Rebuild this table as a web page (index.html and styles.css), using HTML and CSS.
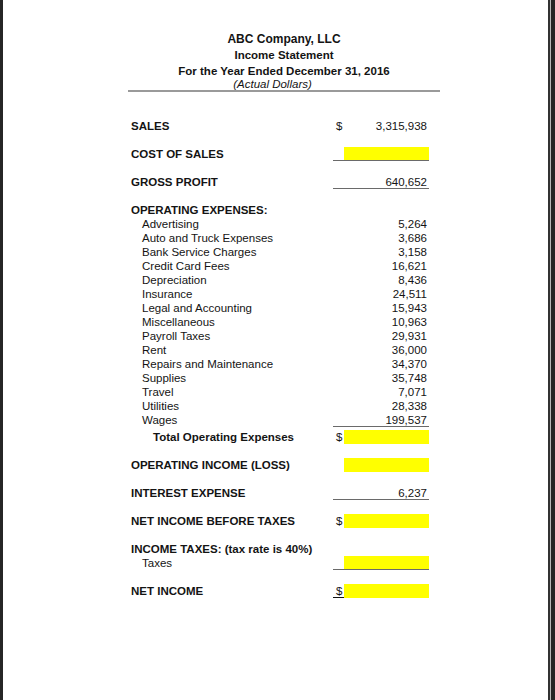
FILE: index.html
```html
<!DOCTYPE html>
<html lang="en">
<head>
<meta charset="utf-8">
<title>ABC Company, LLC Income Statement</title>
<link rel="stylesheet" href="styles.css">
</head>
<body>
<div class="frame">
  <div class="page">
    <div class="statement">
      <header class="head">
        <div class="h-title">ABC Company, LLC</div>
        <div class="h-sub">Income Statement</div>
        <div class="h-period">For the Year Ended December 31, 2016</div>
        <div class="h-note">(Actual Dollars)</div>
      </header>

      <div class="body">
        <div class="row"><div class="label b">SALES</div><div class="amt"><span class="cur">$</span><span class="val">3,315,938</span></div></div>
        <div class="gap"></div>
        <div class="row"><div class="label b">COST OF SALES</div><div class="amt ul"><span class="cur"></span><span class="val hl"></span></div></div>
        <div class="gap"></div>
        <div class="row"><div class="label b">GROSS PROFIT</div><div class="amt ul"><span class="cur"></span><span class="val">640,652</span></div></div>
        <div class="gap"></div>
        <div class="row"><div class="label b">OPERATING EXPENSES:</div><div class="amt"></div></div>
        <div class="row"><div class="label item">Advertising</div><div class="amt"><span class="cur"></span><span class="val">5,264</span></div></div>
        <div class="row"><div class="label item">Auto and Truck Expenses</div><div class="amt"><span class="cur"></span><span class="val">3,686</span></div></div>
        <div class="row"><div class="label item">Bank Service Charges</div><div class="amt"><span class="cur"></span><span class="val">3,158</span></div></div>
        <div class="row"><div class="label item">Credit Card Fees</div><div class="amt"><span class="cur"></span><span class="val">16,621</span></div></div>
        <div class="row"><div class="label item">Depreciation</div><div class="amt"><span class="cur"></span><span class="val">8,436</span></div></div>
        <div class="row"><div class="label item">Insurance</div><div class="amt"><span class="cur"></span><span class="val">24,511</span></div></div>
        <div class="row"><div class="label item">Legal and Accounting</div><div class="amt"><span class="cur"></span><span class="val">15,943</span></div></div>
        <div class="row"><div class="label item">Miscellaneous</div><div class="amt"><span class="cur"></span><span class="val">10,963</span></div></div>
        <div class="row"><div class="label item">Payroll Taxes</div><div class="amt"><span class="cur"></span><span class="val">29,931</span></div></div>
        <div class="row"><div class="label item">Rent</div><div class="amt"><span class="cur"></span><span class="val">36,000</span></div></div>
        <div class="row"><div class="label item">Repairs and Maintenance</div><div class="amt"><span class="cur"></span><span class="val">34,370</span></div></div>
        <div class="row"><div class="label item">Supplies</div><div class="amt"><span class="cur"></span><span class="val">35,748</span></div></div>
        <div class="row"><div class="label item">Travel</div><div class="amt"><span class="cur"></span><span class="val">7,071</span></div></div>
        <div class="row"><div class="label item">Utilities</div><div class="amt"><span class="cur"></span><span class="val">28,338</span></div></div>
        <div class="row"><div class="label item">Wages</div><div class="amt ul"><span class="cur"></span><span class="val">199,537</span></div></div>
        <div class="row total"><div class="label b sub">Total Operating Expenses</div><div class="amt"><span class="cur">$</span><span class="val hl"></span></div></div>
        <div class="gap"></div>
        <div class="row"><div class="label b">OPERATING INCOME (LOSS)</div><div class="amt"><span class="cur"></span><span class="val hl"></span></div></div>
        <div class="gap"></div>
        <div class="row"><div class="label b">INTEREST EXPENSE</div><div class="amt ul"><span class="cur"></span><span class="val">6,237</span></div></div>
        <div class="gap"></div>
        <div class="row"><div class="label b">NET INCOME BEFORE TAXES</div><div class="amt"><span class="cur">$</span><span class="val hl"></span></div></div>
        <div class="gap"></div>
        <div class="row"><div class="label b">INCOME TAXES: (tax rate is 40%)</div><div class="amt"></div></div>
        <div class="row"><div class="label item">Taxes</div><div class="amt ul"><span class="cur"></span><span class="val hl"></span></div></div>
        <div class="gap"></div>
        <div class="row"><div class="label b">NET INCOME</div><div class="amt ul dark"><span class="cur">$</span><span class="val hl"></span></div></div>
      </div>
    </div>
  </div>
</div>
</body>
</html>
```
FILE: styles.css
```css
html, body {
  margin: 0;
  padding: 0;
  background: #ffffff;
}

body {
  font-family: "Liberation Sans", Arial, sans-serif;
  color: #141414;
}

.frame {
  box-sizing: border-box;
  width: 555px;
  height: 700px;
  display: flex;
  border-left: 3px solid #262626;
  border-right: 4px solid #262626;
  background: #b8b8b8;
  overflow: hidden;
}

.page {
  flex: 1;
  background: #ffffff;
  border-right: 2px solid #333333;
  margin-right: 1px;
}

.statement {
  margin-left: 125px;
  width: 312px;
}

.head {
  padding-top: 31px;
  text-align: center;
  font-weight: bold;
  border-bottom: 2px solid #9a9a9a;
}

.h-title {
  font-size: 12px;
  line-height: 16px;
}

.h-sub {
  font-size: 11.5px;
  line-height: 17px;
}

.h-period {
  font-size: 11.5px;
  line-height: 14px;
}

.h-note {
  font-size: 11.5px;
  line-height: 12px;
  font-weight: normal;
  font-style: italic;
  padding-right: 23px;
}

.body {
  padding-top: 27px;
  font-size: 11.5px;
}

.row {
  display: grid;
  grid-template-columns: 205px 96px;
  height: 14px;
  line-height: 14px;
}

.row.total {
  height: 17px;
  padding-top: 3px;
  box-sizing: border-box;
}

.gap {
  height: 14px;
}

.label {
  padding-left: 3px;
  white-space: nowrap;
}

.label.b {
  font-weight: bold;
}

.label.item {
  padding-left: 14px;
}

.label.sub {
  padding-left: 25px;
}

.amt {
  display: grid;
  grid-template-columns: 11px 85px;
  box-sizing: border-box;
  height: 14px;
}

.amt.ul {
  border-bottom: 1px solid #6a6a6a;
}

.amt.ul.dark {
  border-bottom: 1px solid #111111;
}

.cur {
  padding-left: 3px;
}

.val {
  text-align: right;
  padding-right: 2px;
}

.val.hl {
  background: #ffff00;
}
```
